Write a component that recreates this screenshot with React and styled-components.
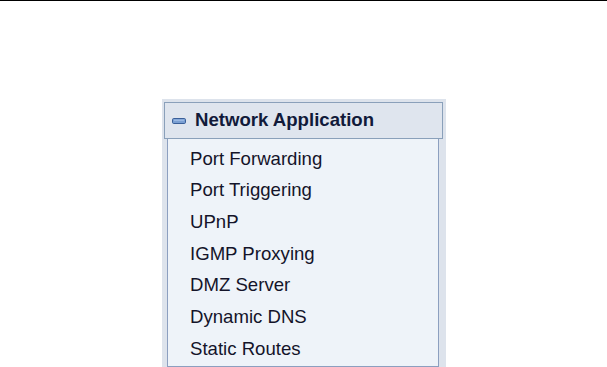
import React from "react";
import styled, { createGlobalStyle } from "styled-components";

const Global = createGlobalStyle`
  html, body { margin: 0; padding: 0; background: #ffffff; }
  body { font-family: "Liberation Sans", Arial, sans-serif; }
`;

const Page = styled.div`
  width: 607px;
  height: 367px;
  overflow: hidden;
  background: #ffffff;
`;

const TopRule = styled.div`
  height: 1px;
  background: #000000;
`;

const Panel = styled.div`
  margin: 98px 0 0 162px;
  width: 284px;
  box-sizing: border-box;
  padding: 3px 3px 3px 2px;
  background: #dde3ec;
`;

const Header = styled.div`
  height: 37px;
  box-sizing: border-box;
  border: 1px solid #8aa0ba;
  background: #dfe5ee;
  display: flex;
  align-items: center;
  padding-left: 7px;
  gap: 9px;
`;

const Title = styled.span`
  font-size: 18.6px;
  font-weight: bold;
  color: #111a3a;
  line-height: 1;
`;

const List = styled.ul`
  list-style: none;
  margin: 0 4px 0 3px;
  padding: 4px 0 1px 0;
  border: 1px solid #8c9fc0;
  border-top: none;
  background: #eef3f9;
`;

const Item = styled.li`
  height: 31.67px;
  display: flex;
  align-items: center;
  padding-left: 22px;
  font-size: 18.6px;
  color: #14142a;
`;

const MinusIcon = () => (
  <svg width="14" height="6" viewBox="0 0 14 6">
    <rect x="0.5" y="0.5" width="13" height="5" rx="1.2" fill="#7a9fd2" stroke="#3a5f98" />
    <line x1="2" y1="2.2" x2="12" y2="2.2" stroke="#a9c4ea" strokeWidth="1" />
  </svg>
);

const items = [
  "Port Forwarding",
  "Port Triggering",
  "UPnP",
  "IGMP Proxying",
  "DMZ Server",
  "Dynamic DNS",
  "Static Routes",
];

export default function App() {
  return (
    <Page>
      <Global />
      <TopRule />
      <Panel>
        <Header>
          <MinusIcon />
          <Title>Network Application</Title>
        </Header>
        <List>
          {items.map((t) => (
            <Item key={t}>{t}</Item>
          ))}
        </List>
      </Panel>
    </Page>
  );
}
